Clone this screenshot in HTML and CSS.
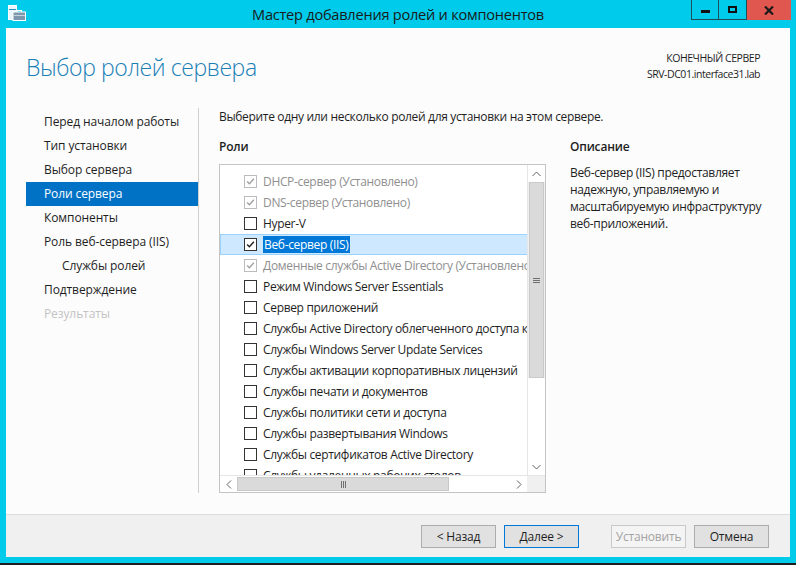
FILE: index.html
```html
<!DOCTYPE html>
<html lang="ru">
<head>
<meta charset="utf-8">
<title>Мастер добавления ролей и компонентов</title>
<link rel="stylesheet" href="styles.css">
</head>
<body>
<div class="window">
  <div class="titlebar">
    <div class="tb-left">
      <svg class="app-icon" width="18" height="16" viewBox="0 0 18 16">
        <rect x="0.5" y="0.5" width="8" height="14" fill="#eaf6fb" stroke="#ffffff"/>
        <rect x="1" y="4" width="7" height="1" fill="#2a8fc4"/>
        <rect x="5" y="7" width="12.5" height="8.5" fill="#7d98ad" stroke="#ffffff" stroke-width="1"/>
        <path d="M9 7 V5.5 H13.5 V7" fill="none" stroke="#ffffff" stroke-width="1.2"/>
        <rect x="5.5" y="10" width="11.5" height="1" fill="#c5d3de"/>
      </svg>
    </div>
    <div class="title">Мастер добавления ролей и компонентов</div>
    <div class="controls">
      <div class="ctl ctl-min"><span class="min-bar"></span></div>
      <div class="ctl ctl-max"><span class="max-box"></span></div>
      <div class="ctl ctl-close">
        <svg width="10" height="9" viewBox="0 0 10 9"><path d="M1 0.5 L9 8.5 M9 0.5 L1 8.5" stroke="#1a1a1a" stroke-width="2.2"/></svg>
      </div>
    </div>
  </div>

  <div class="client">
    <div class="header">
      <h1 class="page-title">Выбор ролей сервера</h1>
      <div class="target">
        <div>КОНЕЧНЫЙ СЕРВЕР</div>
        <div>SRV-DC01.interface31.lab</div>
      </div>
    </div>

    <div class="main">
      <nav class="steps">
        <div class="step">Перед началом работы</div>
        <div class="step">Тип установки</div>
        <div class="step">Выбор сервера</div>
        <div class="step active">Роли сервера</div>
        <div class="step">Компоненты</div>
        <div class="step">Роль веб-сервера (IIS)</div>
        <div class="step sub">Службы ролей</div>
        <div class="step">Подтверждение</div>
        <div class="step disabled">Результаты</div>
      </nav>

      <div class="content">
        <p class="intro">Выберите одну или несколько ролей для установки на этом сервере.</p>
        <div class="columns">
          <div class="roles">
            <div class="label">Роли</div>
            <div class="listbox">
              <div class="list-area">
                <div class="rows">
                  <div class="row dim"><span class="cb checked"><svg viewBox="0 0 13 13"><path d="M2.5 6.5 L5.2 9.2 L10.5 3.2"/></svg></span><span class="txt">DHCP-сервер (Установлено)</span></div>
                  <div class="row dim"><span class="cb checked"><svg viewBox="0 0 13 13"><path d="M2.5 6.5 L5.2 9.2 L10.5 3.2"/></svg></span><span class="txt">DNS-сервер (Установлено)</span></div>
                  <div class="row"><span class="cb"></span><span class="txt">Hyper-V</span></div>
                  <div class="row selected"><span class="cb checked"><svg viewBox="0 0 13 13"><path d="M2.5 6.5 L5.2 9.2 L10.5 3.2"/></svg></span><span class="txt"><span class="sel-text">Веб-сервер (IIS)</span></span></div>
                  <div class="row dim"><span class="cb checked"><svg viewBox="0 0 13 13"><path d="M2.5 6.5 L5.2 9.2 L10.5 3.2"/></svg></span><span class="txt">Доменные службы Active Directory (Установлено)</span></div>
                  <div class="row"><span class="cb"></span><span class="txt">Режим Windows Server Essentials</span></div>
                  <div class="row"><span class="cb"></span><span class="txt">Сервер приложений</span></div>
                  <div class="row"><span class="cb"></span><span class="txt">Службы Active Directory облегченного доступа к каталогам</span></div>
                  <div class="row"><span class="cb"></span><span class="txt">Службы Windows Server Update Services</span></div>
                  <div class="row"><span class="cb"></span><span class="txt">Службы активации корпоративных лицензий</span></div>
                  <div class="row"><span class="cb"></span><span class="txt">Службы печати и документов</span></div>
                  <div class="row"><span class="cb"></span><span class="txt">Службы политики сети и доступа</span></div>
                  <div class="row"><span class="cb"></span><span class="txt">Службы развертывания Windows</span></div>
                  <div class="row"><span class="cb"></span><span class="txt">Службы сертификатов Active Directory</span></div>
                  <div class="row"><span class="cb"></span><span class="txt">Службы удаленных рабочих столов</span></div>
                </div>
                <div class="vscroll">
                  <div class="sb-btn"><svg width="9" height="6" viewBox="0 0 9 6"><path d="M0.5 5 L4.5 1 L8.5 5" fill="none" stroke="#606060" stroke-width="1"/></svg></div>
                  <div class="v-thumb"><svg width="7" height="7" viewBox="0 0 7 7"><path d="M0 1.5 H7 M0 3.5 H7 M0 5.5 H7" stroke="#707070" stroke-width="1"/></svg></div>
                  <div class="v-track"></div>
                  <div class="sb-btn"><svg width="9" height="6" viewBox="0 0 9 6"><path d="M0.5 1 L4.5 5 L8.5 1" fill="none" stroke="#606060" stroke-width="1"/></svg></div>
                </div>
              </div>
              <div class="hscroll">
                <div class="sb-btn h"><svg width="6" height="9" viewBox="0 0 6 9"><path d="M5 0.5 L1 4.5 L5 8.5" fill="none" stroke="#606060" stroke-width="1"/></svg></div>
                <div class="h-thumb"><svg width="7" height="7" viewBox="0 0 7 7"><path d="M1.5 0 V7 M3.5 0 V7 M5.5 0 V7" stroke="#707070" stroke-width="1"/></svg></div>
                <div class="h-track"></div>
                <div class="sb-btn h"><svg width="6" height="9" viewBox="0 0 6 9"><path d="M1 0.5 L5 4.5 L1 8.5" fill="none" stroke="#606060" stroke-width="1"/></svg></div>
                <div class="corner"></div>
              </div>
            </div>
          </div>
          <div class="desc">
            <div class="label">Описание</div>
            <p class="desc-text">Веб-сервер (IIS) предоставляет надежную, управляемую и масштабируемую инфраструктуру веб-приложений.</p>
          </div>
        </div>
      </div>
    </div>

    <div class="footer">
      <button class="btn">&lt; Назад</button>
      <button class="btn default">Далее &gt;</button>
      <button class="btn disabled gap">Установить</button>
      <button class="btn">Отмена</button>
    </div>
  </div>
</div>
</body>
</html>
```

FILE: styles.css
```css
* { box-sizing: border-box; }

html, body {
  margin: 0;
  padding: 0;
  background: #1e1e1e;
}

body {
  font-family: "Open Sans", "Noto Sans", "Liberation Sans", sans-serif;
  font-size: 12px;
  color: #1e1e1e;
}

.window {
  width: 796px;
  height: 563px;
  background: #00cbea;
  display: flex;
  flex-direction: column;
}

/* ---------- title bar ---------- */
.titlebar {
  height: 28px;
  display: grid;
  grid-template-columns: 1fr auto 1fr;
  align-items: start;
}

.tb-left {
  padding: 5px 0 0 8px;
}

.app-icon { display: block; }

.title {
  line-height: 28px;
  font-size: 14.6px;
  color: #1a1a1a;
  letter-spacing: -0.25px;
}

.controls {
  display: flex;
  justify-content: flex-end;
  padding-right: 5px;
}

.ctl {
  height: 20px;
  display: flex;
  align-items: center;
  justify-content: center;
}

.ctl-min, .ctl-max {
  width: 28px;
  border: 1px solid #1d4f5a;
  border-top: none;
}

.ctl-max { border-left: none; }

.min-bar {
  width: 9px;
  height: 3px;
  background: #111;
  margin-top: 4px;
}

.max-box {
  width: 9px;
  height: 7px;
  border: 2px solid #111;
}

.ctl-close {
  width: 44px;
  background: #e0574f;
}

/* ---------- client ---------- */
.client {
  flex: 1;
  margin: 0 6px 6px 6px;
  background: #fcfcfc;
  display: flex;
  flex-direction: column;
}

.header {
  height: 80px;
  display: flex;
  justify-content: space-between;
  align-items: flex-start;
}

.page-title {
  margin: 23px 0 0 20px;
  font-family: "Open Sans", "Noto Sans", sans-serif;
  font-weight: 300;
  font-size: 23px;
  line-height: 32px;
  color: #1a80b6;
  letter-spacing: -0.4px;
}

.target {
  margin: 22px 30px 0 0;
  text-align: right;
  font-size: 10.5px;
  line-height: 16px;
  color: #1e1e1e;
  letter-spacing: -0.45px;
}

.main {
  flex: 1;
  display: flex;
  align-items: flex-start;
}

.steps {
  width: 193px;
  height: 385px;
  border-right: 1px solid #cfcfcf;
  padding: 2px 0 0 20px;
  flex-shrink: 0;
}

.step {
  height: 24px;
  line-height: 24px;
  padding-left: 18px;
  white-space: nowrap;
  letter-spacing: -0.1px;
  color: #1e1e1e;
}

.step.sub { padding-left: 36px; }

.step.active {
  background: #0072c6;
  color: #ffffff;
}

.step.disabled { color: #c3c3c3; }

.content {
  flex: 1;
  padding: 1px 0 0 20px;
}

.intro {
  margin: 0;
  line-height: 16px;
  letter-spacing: -0.33px;
}

.columns {
  display: flex;
  gap: 24px;
  margin-top: 14px;
}

.label {
  font-weight: 600;
  line-height: 16px;
  letter-spacing: -0.2px;
  margin-bottom: 9px;
}

.roles { width: 327px; flex-shrink: 0; }

.listbox {
  height: 329px;
  border: 1px solid #c4c4c4;
  background: #ffffff;
  display: flex;
  flex-direction: column;
}

.list-area {
  flex: 1;
  display: flex;
  min-height: 0;
}

.rows {
  flex: 1;
  overflow: hidden;
  padding-top: 6px;
  min-width: 0;
}

.row {
  height: 21px;
  display: flex;
  align-items: center;
  padding-left: 23px;
  white-space: nowrap;
  border: 1px solid transparent;
  border-right: none;
}

.row .txt {
  margin-left: 6px;
  letter-spacing: -0.33px;
  line-height: 16px;
}

.row.dim .txt { color: #8f8f8f; }

.row.selected {
  background: #cde8ff;
  border-color: #99d1ff;
}

.sel-text {
  background: #0078d7;
  color: #ffffff;
  padding: 0 1px;
}

.cb {
  width: 13px;
  height: 13px;
  border: 1px solid #333333;
  background: #ffffff;
  flex-shrink: 0;
  display: flex;
}

.cb svg {
  width: 11px;
  height: 11px;
  fill: none;
  stroke: #1e1e1e;
  stroke-width: 1.6;
}

.row.dim .cb { border-color: #bcbcbc; }
.row.dim .cb svg { stroke: #a0a0a0; }

/* scrollbars */
.vscroll {
  width: 18px;
  border-left: 1px solid #e6e6e6;
  display: flex;
  flex-direction: column;
  background: #f0f0f0;
}

.sb-btn {
  height: 17px;
  display: flex;
  align-items: center;
  justify-content: center;
  background: #ffffff;
  flex-shrink: 0;
}

.sb-btn.h {
  width: 17px;
  height: auto;
}

.v-thumb {
  height: 196px;
  margin: 0 1px;
  background: #dadada;
  border: 1px solid #c9c9c9;
  display: flex;
  align-items: center;
  justify-content: center;
}

.v-track {
  flex: 1;
  background: #ffffff;
}

.hscroll {
  height: 17px;
  display: flex;
  border-top: 1px solid #e6e6e6;
  background: #ffffff;
}

.h-thumb {
  width: 212px;
  margin: 1px 0;
  background: #dadada;
  border: 1px solid #c9c9c9;
  display: flex;
  align-items: center;
  justify-content: center;
}

.h-track { flex: 1; }

.corner {
  width: 18px;
  background: #f0f0f0;
}

.desc { flex: 1; }

.desc-text {
  margin: 0;
  width: 200px;
  line-height: 17px;
  letter-spacing: -0.33px;
}

/* ---------- footer ---------- */
.footer {
  height: 43px;
  border-top: 1px solid #dcdcdc;
  background: #f0f0f0;
  display: flex;
  justify-content: flex-end;
  align-items: flex-start;
  gap: 8px;
  padding: 10px 21px 0 0;
}

.btn {
  width: 75px;
  height: 23px;
  font-family: "Open Sans", "Noto Sans", sans-serif;
  font-size: 12px;
  letter-spacing: -0.2px;
  color: #1e1e1e;
  background: #e1e1e1;
  border: 1px solid #adadad;
  padding: 0;
}

.btn.default { border-color: #0078d7; }

.btn.disabled {
  background: #f4f4f4;
  border-color: #c9c9c9;
  color: #a3a3a3;
}

.btn.gap { margin-left: 24px; }
```
